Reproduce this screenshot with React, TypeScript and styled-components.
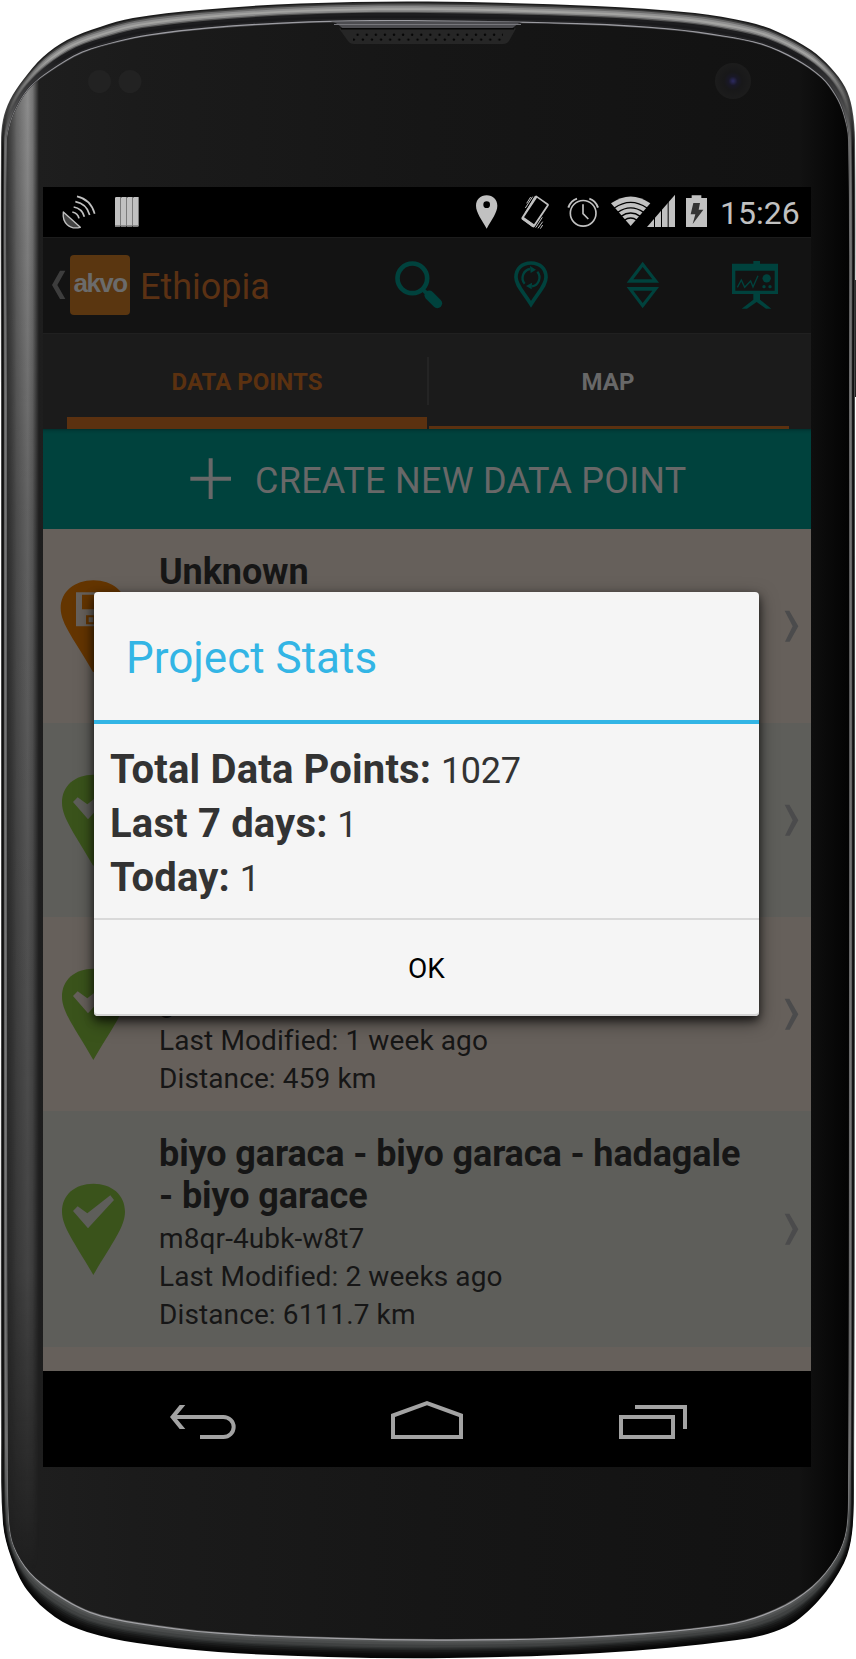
import React from 'react';
import styled, { createGlobalStyle } from 'styled-components';

const GlobalStyle = createGlobalStyle`
  * { box-sizing: border-box; }
  body { margin: 0; background: #fff; }
`;

/* ---------- device body ---------- */

type Pt = [number, number];

const OUTER: Pt[] = [
  [428, 1.5], [595, 6], [695, 13], [748, 22], [778, 32], [811, 50], [831, 68], [845, 87], [852, 108], [855, 140],
  [855, 400], [855, 1000], [854, 1480], [852, 1533], [844, 1563], [819, 1600], [786, 1627], [737, 1640], [600, 1653],
  [448, 1658], [328, 1657], [218, 1652], [137, 1643], [87, 1632], [55, 1617], [27, 1590], [11, 1557], [3, 1523],
  [1, 1440], [1, 1000], [1, 400], [1, 143], [3, 120], [10, 100], [23, 80], [43, 57], [67, 40], [100, 27], [133, 18],
  [200, 10], [300, 3.5],
];

const INNER: Pt[] = [
  [428, 22], [585, 25], [668, 30], [722, 37], [761, 45], [795, 60], [821, 78], [835, 96], [843, 114], [848, 140],
  [849, 400], [849, 1000], [848, 1480], [846, 1530], [836, 1557], [812, 1586], [775, 1609], [725, 1624], [590, 1636],
  [448, 1639], [328, 1637], [218, 1632], [137, 1622], [90, 1611], [55, 1592], [30, 1572], [14, 1546], [9, 1518],
  [8, 1440], [7, 1000], [7, 400], [7, 143], [11, 122], [19, 104], [31, 87], [50, 72], [83, 53], [120, 42], [150, 36],
  [210, 29], [310, 23],
];

const contour = (t: number): string => {
  const pts = OUTER.map(([x, y], i): Pt => [x + (INNER[i][0] - x) * t, y + (INNER[i][1] - y) * t]);
  const n = pts.length;
  const tangent = (i: number): Pt => {
    const a = pts[(i - 1 + n) % n];
    const b = pts[(i + 1) % n];
    const l = Math.hypot(b[0] - a[0], b[1] - a[1]);
    return [(b[0] - a[0]) / l, (b[1] - a[1]) / l];
  };
  let d = `M${pts[0][0]} ${pts[0][1]}`;
  for (let i = 0; i < n; i++) {
    const p = pts[i];
    const q = pts[(i + 1) % n];
    const h = Math.hypot(q[0] - p[0], q[1] - p[1]) / 3;
    const u = tangent(i);
    const v = tangent((i + 1) % n);
    d += `C${p[0] + u[0] * h} ${p[1] + u[1] * h} ${q[0] - v[0] * h} ${q[1] - v[1] * h} ${q[0]} ${q[1]}`;
  }
  return d + 'Z';
};

/* depth, colour at the top, along the sides, at the bottom */
const RIM: [number, string, string, string][] = [
  [0, '#1c1c1c', '#666', '#050505'],
  [0.08, '#3a3a3a', '#3a3a3a', '#080808'],
  [0.15, '#6c6c6c', '#161616', '#0c0c0c'],
  [0.24, '#8f8f8f', '#0c0c0c', '#131313'],
  [0.33, '#a4a4a2', '#101010', '#1b1c1c'],
  [0.42, '#8a8a8a', '#222', '#262828'],
  [0.5, '#555', '#4a4a4a', '#333535'],
  [0.56, '#1d1d1f', '#6e6e6e', '#3f4141'],
  [0.7, '#19191b', '#7c7c7c', '#4a4c4c'],
  [0.82, '#222224', '#555', '#555757'],
  [0.91, '#9c9ca2', '#8a8a8c', '#a2a2a6'],
  [0.97, '#4a4a4c', '#3a3a3a', '#555'],
];

const Device = styled.main`
  position: relative;
  width: 856px;
  height: 1659px;
  padding: 187px 45px 192px 43px;
  overflow: hidden;
  font-family: Roboto, 'Liberation Sans', sans-serif;
`;

const BodyArt = styled.svg`
  position: absolute;
  inset: 0;
`;

const DeviceBody = () => (
  <BodyArt width="856" height="1659" viewBox="0 0 856 1659" aria-hidden="true">
    <defs>
      {RIM.map(([t, top, side, bottom], i) => (
        <linearGradient key={t} id={`rim${i}`} gradientUnits="userSpaceOnUse" x1="0" y1="0" x2="0" y2="1659">
          <stop offset="0.035" stopColor={top} />
          <stop offset="0.09" stopColor={side} />
          <stop offset="0.87" stopColor={side} />
          <stop offset="0.92" stopColor={bottom} />
        </linearGradient>
      ))}
      <linearGradient id="face" x1="0" x2="1" y1="0" y2="0">
        <stop offset="0" stopColor="#1f1f1f" />
        <stop offset="0.15" stopColor="#1b1b1b" />
        <stop offset="0.5" stopColor="#161616" />
        <stop offset="0.94" stopColor="#121212" />
        <stop offset="1" stopColor="#030303" />
      </linearGradient>
      <linearGradient id="sheen" gradientUnits="userSpaceOnUse" x1="7" x2="39" y1="0" y2="0">
        <stop offset="0" stopColor="#444" stopOpacity="0.6" />
        <stop offset="0.3" stopColor="#6a6a6a" />
        <stop offset="0.65" stopColor="#8f8f8f" />
        <stop offset="0.8" stopColor="#777" />
        <stop offset="1" stopColor="#777" stopOpacity="0" />
      </linearGradient>
      <linearGradient id="fade" x1="0" x2="0" y1="0" y2="1">
        <stop offset="0" stopColor="#fff" />
        <stop offset="0.3" stopColor="#999" />
        <stop offset="0.8" stopColor="#555" />
        <stop offset="1" stopColor="#000" />
      </linearGradient>
      <mask id="sheenMask">
        <rect x="0" y="70" width="60" height="1500" fill="url(#fade)" />
      </mask>
      <clipPath id="faceClip">
        <path d={contour(1)} />
      </clipPath>
      <pattern id="holes" width="9.1" height="10" patternUnits="userSpaceOnUse" x="353" y="33">
        <circle cx="4.6" cy="1.8" r="1.2" fill="#050505" />
        <circle cx="0.8" cy="6.6" r="1.2" fill="#050505" />
        <circle cx="9.9" cy="6.6" r="1.2" fill="#050505" />
      </pattern>
      <radialGradient id="lens">
        <stop offset="0" stopColor="#2d2b62" />
        <stop offset="0.25" stopColor="#191827" />
        <stop offset="0.5" stopColor="#181819" />
        <stop offset="1" stopColor="#1c1c1c" />
      </radialGradient>
    </defs>
    <rect x="853" y="280" width="3" height="117" fill="#222" />
    {RIM.map(([t], i) => (
      <path key={t} d={contour(t)} fill={`url(#rim${i})`} />
    ))}
    <path d={contour(1)} fill="url(#face)" />
    <g clipPath="url(#faceClip)">
      <rect x="7" y="70" width="32" height="1500" fill="url(#sheen)" mask="url(#sheenMask)" />
    </g>
    <path d="M330 21.5C338 22 340 28 345 29H510C515 28 517 22 525 21.5Z" fill="#4c4c50" />
    <path d="M334 24.5H521" stroke="#77777c" strokeWidth="1" />
    <path d="M339 28.5H516L509 41Q507 44 503 44H354Q350 44 348 41Z" fill="#262626" />
    <path d="M341 28.8H514" stroke="#060606" strokeWidth="1.4" />
    <rect x="353" y="33" width="150" height="9" fill="url(#holes)" />
    <circle cx="99.5" cy="81.5" r="11.5" fill="#222" />
    <circle cx="130" cy="81.5" r="11.5" fill="#222" />
    <circle cx="733" cy="81" r="18" fill="url(#lens)" />
  </BodyArt>
);

/* ---------- screen ---------- */

const Screen = styled.div`
  position: relative;
  display: flex;
  flex-direction: column;
  width: 768px;
  height: 1280px;
  background: #000;
  white-space: nowrap;
  overflow: hidden;
`;

const StatusBar = styled.div`
  display: flex;
  height: 50px;
  padding-left: 18px;
  color: #c1c1c1;
  background: #000;
`;

const StatusEnd = styled.div`
  display: flex;
  margin-left: auto;
`;

const Clock = styled.div`
  width: 91px;
  line-height: 52px;
  font-size: 32px;
`;

const Glyph = styled.svg`
  display: block;
  flex: none;
`;

/* Bar icons share a grid of three units to the pixel. */
const Icon = ({ x, y, w, h, children }: { x: number; y: number; w: number; h: number; children: React.ReactNode }) => (
  <Glyph width={w / 3} height={h / 3} viewBox={`${x} ${y} ${w} ${h}`} fill="currentColor" aria-hidden="true">
    {children}
  </Glyph>
);

const ActionBar = styled.header`
  display: flex;
  height: 96px;
  background: #131313;
  border-top: 1px solid #1c1c1c;
  color: #3d3d3d;
`;

const AppLogo = styled.div`
  width: 60px;
  height: 60px;
  margin-top: 17px;
  border-radius: 4px;
  background: #5a3610;
  color: #6b6b6b;
  font: bold 26px/57px 'Liberation Sans', sans-serif;
  letter-spacing: -1.6px;
  text-align: center;
`;

const ScreenTitle = styled.h1`
  margin: 0 0 0 10px;
  color: #5b3113;
  font-size: 36px;
  font-weight: 400;
  line-height: 99px;
`;

const Actions = styled.div`
  display: flex;
  margin-left: auto;
  color: #00423d;
`;

const TabBar = styled.nav`
  display: flex;
  height: 96px;
  padding: 0 22px 0 24px;
  background: #1b1b1b;
  border-top: 1px solid #202020;
`;

const Tab = styled.div<{ $active?: boolean }>`
  width: 360px;
  padding-right: ${(p) => (p.$active ? 0 : 2)}px;
  border-bottom: ${(p) => (p.$active ? 12 : 3)}px solid #5b3110;
  color: ${(p) => (p.$active ? '#5b3110' : '#686868')};
  font-size: 24px;
  font-weight: 700;
  line-height: 97px;
  text-align: center;
`;

const TabDivider = styled.div`
  width: 2px;
  height: 48px;
  margin-top: 23px;
  background: #242424;
`;

const CreateButton = styled.div`
  display: flex;
  height: 100px;
  padding-left: 147px;
  color: #686868;
  background: linear-gradient(#00302d, #003c38 2px, #00423d 5px);
  font-size: 36px;
  line-height: 104px;
  letter-spacing: 0.26px;
`;

const CreateLabel = styled.span`
  margin-left: 23px;
`;

const List = styled.div`
  flex: 1;
  overflow: hidden;
`;

const Row = styled.div<{ $alt?: boolean; $tall?: boolean }>`
  display: flex;
  align-items: center;
  height: ${(p) => (p.$tall ? 236 : 194)}px;
  padding: 0 12px 0 17px;
  background: ${(p) => (p.$alt ? '#5e5e5a' : '#66605b')};
  color: #4b4b4c;
`;

const RowText = styled.div<{ $end?: boolean }>`
  display: flex;
  flex: 1;
  flex-direction: column;
  align-self: stretch;
  justify-content: ${(p) => (p.$end ? 'flex-end' : 'flex-start')};
  padding: 22px 0 13px 32px;
  color: #161616;
`;

const RowTitle = styled.div`
  margin-bottom: 3px;
  font-size: 36px;
  font-weight: 700;
  line-height: 42px;
  letter-spacing: -0.11px;
  white-space: pre-line;
`;

const RowLine = styled.div`
  font-size: 28px;
  line-height: 38px;
  letter-spacing: 0.11px;
`;

const NavBar = styled.footer`
  display: flex;
  align-items: flex-end;
  height: 96px;
  padding: 0 0 27px 126px;
  gap: 153px;
  color: #a3a3a3;
  background: #000;
`;

/* ---------- dialog ---------- */

const Dialog = styled.section`
  position: absolute;
  left: 51px;
  top: 405px;
  width: 665px;
  height: 424px;
  border-radius: 4px;
  background: #f5f5f5;
  box-shadow: 0 4px 8px rgba(0, 0, 0, 0.6), 0 6px 18px rgba(0, 0, 0, 0.5), inset 0 -2px 0 #d4d4d4;
`;

const DialogTitle = styled.h2`
  height: 132px;
  margin: 0;
  padding-left: 32px;
  border-bottom: 4px solid #33b5e5;
  color: #33b5e5;
  font-size: 44px;
  font-weight: 400;
  line-height: 132px;
`;

const Stats = styled.div`
  height: 196px;
  padding: 19px 0 0 16px;
  border-bottom: 2px solid #d9d9d9;
  color: #333;
  font-size: 36px;
  line-height: 54px;
`;

const StatLabel = styled.b`
  margin-right: 1px;
  font-size: 40px;
  letter-spacing: 0.17px;
`;

const StatRow = styled.div`
  height: 54px;
  letter-spacing: -0.3px;
`;

const OkButton = styled.div`
  height: 96px;
  color: #000;
  font-size: 28px;
  line-height: 98px;
  text-align: center;
`;

const PIN = 'M160 159C215 159 255 192 255 243C255 290 213 341 160 433C108 341 66 290 66 243C66 192 105 159 160 159Z';

const DonePin = () => (
  <Icon x={60} y={157} w={201} h={278}>
    <path
      fill="#3a531b"
      fillRule="evenodd"
      d={`${PIN}M99 241L113 227L142 248L211 194L222 208L144 293Z`}
    />
  </Icon>
);

const SavedPin = () => (
  <Icon x={60} y={149} w={201} h={278}>
    <path
      fill="#643500"
      fillRule="evenodd"
      d="M160 150C217 150 259 184 259 234C259 282 213 334 160 427C108 334 62 282 62 234C62 184 104 150 160 150ZM108 186V288H212V204L194 186ZM126 193H186V237H126ZM138 255H182V282H138ZM146 261V276H160V261Z"
    />
  </Icon>
);

const Chevron = () => (
  <Icon x={1032} y={240} w={45} h={98}>
    <path d="M1034 242H1048L1075 289L1049 335H1035L1058 289Z" />
  </Icon>
);

const Stat = ({ label, value }: { label: string; value: string }) => (
  <StatRow>
    <StatLabel>{label}</StatLabel> {value}
  </StatRow>
);

export default function App() {
  return (
    <Device>
      <GlobalStyle />
      <DeviceBody />
      <Screen>
        <StatusBar>
          <Icon x={63} y={21} w={159} h={150}>
            <path d="M70 96C66 128 88 150 121 142Z" fill="#444" stroke="currentColor" strokeWidth="4" strokeLinejoin="round" />
            <g fill="none" stroke="currentColor" strokeWidth="5">
              <path d="M97 96Q114 100 117 115" />
              <path d="M101 81Q126 85 133 110" />
              <path d="M106 65Q140 71 149 105" />
              <path d="M111 49Q152 58 164 101" />
            </g>
          </Icon>
          <Icon x={222} y={21} w={78} h={150}>
            {[225, 243, 261, 279].map((x) => (
              <g key={x}>
                <path d={`M${x} 54L${x + 3} 51H${x + 18}V137L${x + 15} 141H${x}Z`} fill="#7b7b7b" />
                <path d={`M${x} 54L${x + 3} 51H${x + 15}V136H${x}Z`} />
              </g>
            ))}
          </Icon>
          <StatusEnd>
            <Icon x={135} y={21} w={135} h={150}>
              <path
                fillRule="evenodd"
                d="M170 46C189 46 202 59 202 77C202 98 184 120 170 146C156 120 138 98 138 77C138 59 151 46 170 46ZM170 64A10 10 0 1 0 170 84A10 10 0 1 0 170 64Z"
              />
            </Icon>
            <Icon x={270} y={21} w={141} h={150}>
              <path
                fillRule="evenodd"
                d="M320 47L355 71Q358 74 356 77L314 140Q311 144 307 141L275 118Q273 115 275 112L315 49Q317 46 320 47ZM321 53L282 112L312 133L351 75Z"
              />
              <path d="M280 112L313 135L308 141L276 118Z" />
              <path
                d="M286 84L308 50M290 70L302 51M287 97L315 49M317 143L337 112M324 145L338 125M331 146L338 135"
                stroke="currentColor"
                strokeWidth="3"
              />
            </Icon>
            <Icon x={411} y={21} w={129} h={150}>
              <g fill="none" stroke="currentColor">
                <circle cx="459.500" cy="100" r="38.500" strokeWidth="5" />
                <path d="M459 73V101L475 117" strokeWidth="5" />
                <path d="M415 83Q422 62 441 56M504 83Q497 62 478 56" strokeWidth="6" />
              </g>
            </Icon>
            <Icon x={540} y={21} w={225} h={150}>
              <path d="M602 138L543 70Q602 29 661 70Z" />
              <g fill="none" stroke="#000" strokeWidth="4">
                <path d="M553 84Q602 50 651 84" />
                <path d="M563 97Q602 70 641 97" />
                <path d="M573 109Q602 89 631 109" />
                <path d="M583 121Q602 107 621 121" />
              </g>
              <path d="M651 141L735 44V141Z" />
              <path d="M673.500 100V142M694.500 80V142M714.500 60V142" stroke="#000" strokeWidth="3" />
            </Icon>
            <Icon x={765} y={21} w={105} h={150}>
              <path d="M768 54H785V46H814V54H831V141H768Z" />
              <path d="M790 69H810L806 89H820L788 132L796 103H782Z" fill="#333" />
            </Icon>
            <Clock>15:26</Clock>
          </StatusEnd>
        </StatusBar>

        <ActionBar>
          <Icon x={9} y={174} w={81} h={285}>
            <path d="M60 272H76L52 315L76 357H60L36 315Z" />
          </Icon>
          <AppLogo>akvo</AppLogo>
          <ScreenTitle>Ethiopia</ScreenTitle>
          <Actions>
            <Icon x={1059} y={174} w={360} h={285}>
              <circle cx="1117" cy="295" r="44.500" fill="none" stroke="currentColor" strokeWidth="14" />
              <path d="M1145 325L1165 345" stroke="currentColor" strokeWidth="12" />
              <path d="M1168 346L1192 370" stroke="currentColor" strokeWidth="29" strokeLinecap="round" />
            </Icon>
            <Icon x={249} y={174} w={339} h={285}>
              <g fill="none" stroke="currentColor">
                <path
                  d="M303 249C331 249 348 267 348 292C348 316 327 334 303 373C279 334 258 316 258 292C258 267 275 249 303 249Z"
                  strokeWidth="11"
                />
                <path d="M284 311A27 27 0 0 1 300 267M322 275A27 27 0 0 1 306 319" strokeWidth="7" />
              </g>
              <path d="M300 258L318 269L302 279ZM306 308L288 318L305 328Z" />
            </Icon>
            <Icon x={588} y={174} w={315} h={285}>
              <path
                fillRule="evenodd"
                d="M638 245L687 308H590ZM638 261L610 298H667ZM590 321H687L638 385ZM610 332L638 369L667 332Z"
              />
            </Icon>
            <Icon x={903} y={174} w={240} h={285}>
              <path fillRule="evenodd" d="M906 251H970V243H990V251H1044V342H906ZM916 272V332H1034V272Z" />
              <path
                d="M922 322L934 300L944 322L962 303L969 321L984 287"
                fill="none"
                stroke="currentColor"
                strokeWidth="4"
              />
              <circle cx="1010" cy="295" r="12.500" />
              <circle cx="1002" cy="320" r="5" />
              <circle cx="1020" cy="320" r="5" />
              <path d="M970 342H990V359L1024 386H1008L980 366L951 386H935L970 359Z" />
            </Icon>
          </Actions>
        </ActionBar>

        <TabBar>
          <Tab $active>DATA POINTS</Tab>
          <TabDivider />
          <Tab>MAP</Tab>
        </TabBar>

        <CreateButton>
          <Icon x={450} y={282} w={126} h={300}>
            <path d="M451 425H506V370H518V425H573V437H518V492H506V437H451Z" />
          </Icon>
          <CreateLabel>CREATE NEW DATA POINT</CreateLabel>
        </CreateButton>

        <List>
          <Row>
            <SavedPin />
            <RowText>
              <RowTitle>Unknown</RowTitle>
            </RowText>
            <Chevron />
          </Row>
          <Row $alt>
            <DonePin />
            <RowText />
            <Chevron />
          </Row>
          <Row>
            <DonePin />
            <RowText $end>
              <RowLine>g</RowLine>
              <RowLine>Last Modified: 1 week ago</RowLine>
              <RowLine>Distance: 459 km</RowLine>
            </RowText>
            <Chevron />
          </Row>
          <Row $alt $tall>
            <DonePin />
            <RowText>
              <RowTitle>{'biyo garaca - biyo garaca - hadagale\n- biyo garace'}</RowTitle>
              <RowLine>m8qr-4ubk-w8t7</RowLine>
              <RowLine>Last Modified: 2 weeks ago</RowLine>
              <RowLine>Distance: 6111.7 km</RowLine>
            </RowText>
            <Chevron />
          </Row>
          <Row />
        </List>

        <NavBar>
          <Icon x={387} y={822} w={204} h={108}>
            <path d="M390 861L419 825H436L411 855H550A37 36 0 0 1 550 927H480V915H550A25 24 0 0 0 550 867H411L436 897H419Z" />
          </Icon>
          <Icon x={1050} y={810} w={225} h={120}>
            <path
              fillRule="evenodd"
              d="M1053 852L1161 813L1269 852V927H1053ZM1065 861V915H1257V861L1161 826Z"
            />
          </Icon>
          <Icon x={534} y={822} w={210} h={108}>
            <path fillRule="evenodd" d="M537 855H705V927H537ZM549 867V915H693V867ZM585 825H741V897H729V837H585Z" />
          </Icon>
        </NavBar>

        <Dialog role="dialog">
          <DialogTitle>Project Stats</DialogTitle>
          <Stats>
            <Stat label="Total Data Points:" value="1027" />
            <Stat label="Last 7 days:" value="1" />
            <Stat label="Today:" value="1" />
          </Stats>
          <OkButton>OK</OkButton>
        </Dialog>
      </Screen>
    </Device>
  );
}
